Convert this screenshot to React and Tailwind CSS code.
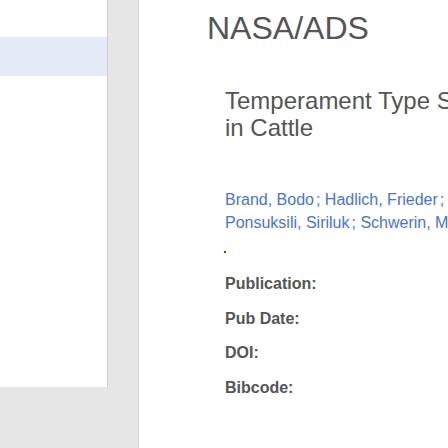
export default function App() {
  const font = { fontFamily: '"Liberation Sans", Arial, sans-serif' };
  return (
    <div className="flex h-[448px] w-[448px] overflow-hidden bg-white" style={font}>
      <div className="flex w-[139px] shrink-0 flex-col border-r border-[#d6d6d6] bg-[#e6e6e6]">
        <div className="h-[387px] w-[108px] border-r border-[#cfcfcf] bg-white">
          <div className="mt-[37px] h-[39px] bg-[#e4ebf7]" />
        </div>
      </div>
      <div className="relative flex-1 bg-white">
        <div className="pl-[68px] pt-[12px] text-[32px] leading-none text-[#555]">NASA/ADS</div>
        <div className="pl-[86px]">
          <h1 className="mt-[43px] whitespace-nowrap text-[24px] leading-[27px] text-[#555]">
            Temperament Type Specific Metabolite
            <br />
            in Cattle
          </h1>
          <div className="mt-[47px] whitespace-nowrap text-[16px] leading-[23px] text-[#4a74d6]">
            <div>
              Brand, Bodo<span className="ml-[2px]">;</span> Hadlich, Frieder<span className="ml-[2px]">;</span> Eggert, Anja
            </div>
            <div>
              Ponsuksili, Siriluk<span className="ml-[2px]">;</span> Schwerin, Manfred
            </div>
          </div>
          <div className="-ml-px mt-[17px] h-[2px] w-[2px] bg-[#ff0000]" />
          <div className="mt-[14px] flex flex-col text-[16px] font-bold leading-[34.5px] text-[#555]">
            <div>Publication:</div>
            <div>Pub Date:</div>
            <div>DOI:</div>
            <div>Bibcode:</div>
          </div>
        </div>
      </div>
    </div>
  );
}
